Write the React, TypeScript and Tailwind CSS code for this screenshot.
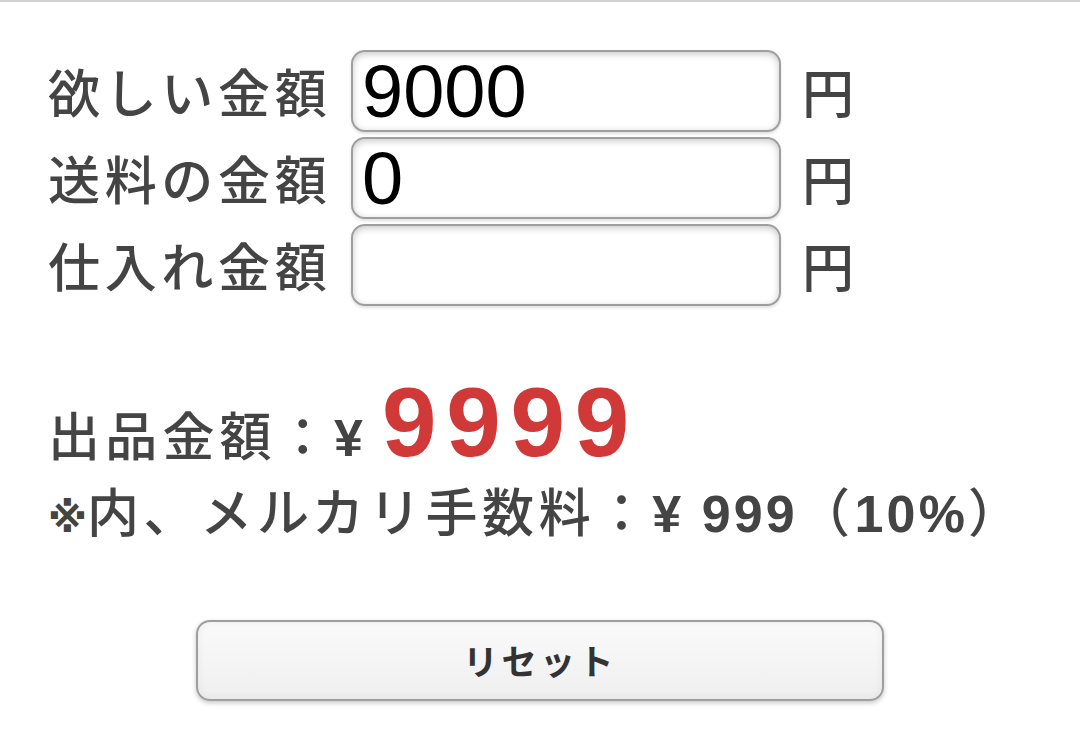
import React, { useState } from "react";

const jp = "font-['Noto_Sans_CJK_JP',sans-serif]";

function Row({ label, value, onChange }: { label: string; value: string; onChange: (v: string) => void }) {
  return (
    <div className="flex items-center h-[82px]">
      <span className={`w-[303px] text-[52px] leading-none tracking-[0.09em] font-medium ${jp}`}>{label}</span>
      <input
        type="text"
        value={value}
        onChange={(e) => onChange(e.target.value)}
        className="w-[430px] h-[82px] rounded-[14px] border-2 border-[#9e9e9e] bg-white pl-[9px] text-[74px] leading-none text-black font-['Liberation_Sans',sans-serif] outline-none shadow-[inset_0_2px_7px_rgba(0,0,0,0.22),0_2px_3px_rgba(0,0,0,0.12)]"
      />
      <span className={`ml-[21px] text-[52px] leading-none font-medium ${jp}`}>円</span>
    </div>
  );
}

export default function App() {
  const [want, setWant] = useState("9000");
  const [ship, setShip] = useState("0");
  const [cost, setCost] = useState("");

  return (
    <div className="min-h-[751px] bg-white border-t-2 border-[#d2d2d2] text-[#444]">
      <div className="pl-[48px] pt-[48px] flex flex-col gap-[5px]">
        <Row label="欲しい金額" value={want} onChange={setWant} />
        <Row label="送料の金額" value={ship} onChange={setShip} />
        <Row label="仕入れ金額" value={cost} onChange={setCost} />
      </div>

      <div className="pl-[48px] mt-[66px]">
        <div className="flex items-baseline leading-[100px]">
          <span className={`text-[52px] tracking-[0.1em] font-medium ${jp}`}>出品金額：</span>
          <span className="text-[52px] font-bold font-['Liberation_Sans',sans-serif]">¥</span>
          <span className="ml-[19px] text-[98px] font-bold tracking-[0.1em] text-[#d13838] font-['Liberation_Sans',sans-serif]">9999</span>
        </div>
        <div className={`leading-[44px] text-[52px] tracking-[0.09em] font-medium ${jp}`}>
          <span className="text-[40px] font-bold tracking-normal font-['DejaVu_Sans',sans-serif]">※</span>
          内、メルカリ手数料：
          <span className="font-bold tracking-[0.06em] font-['Liberation_Sans',sans-serif]">¥ 999</span>
          （<span className="font-bold tracking-[0.06em] font-['Liberation_Sans',sans-serif]">10%</span>）
        </div>
      </div>

      <div className="flex justify-center mt-[80px]">
        <button
          type="button"
          onClick={() => {
            setWant("");
            setShip("");
            setCost("");
          }}
          className={`w-[688px] h-[81px] rounded-[14px] border-2 border-[#9e9e9e] bg-gradient-to-b from-[#fafafa] to-[#efefef] text-[35px] font-bold tracking-[0.1em] text-[#333] shadow-[0_2px_5px_rgba(0,0,0,0.22),inset_0_0_8px_rgba(0,0,0,0.06)] ${jp}`}
        >
          リセット
        </button>
      </div>
    </div>
  );
}
